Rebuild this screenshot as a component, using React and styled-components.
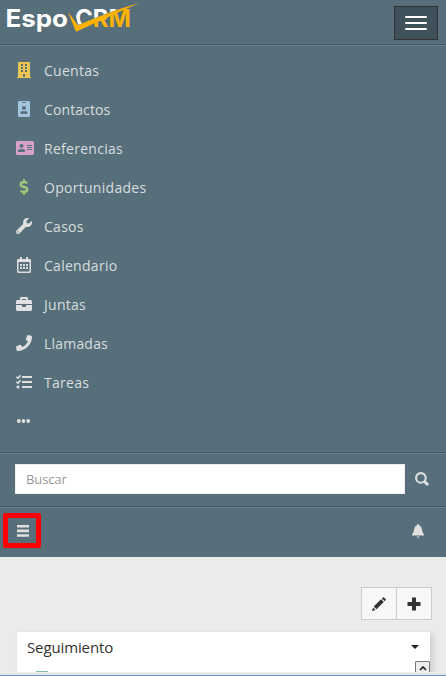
import React from "react";
import styled, { createGlobalStyle } from "styled-components";
import {
  FaBuilding, FaIdBadge, FaAddressCard, FaDollarSign, FaWrench,
  FaRegCalendarAlt, FaBriefcase, FaPhone, FaTasks,
} from "react-icons/fa";

const GlobalStyle = createGlobalStyle`
  * { box-sizing: border-box; }
  body { margin: 0; background: #ebebeb; font-family: "Open Sans", sans-serif; font-size: 14px; }
`;
const Page = styled.div`
  width: 446px; height: 676px; overflow: hidden;
  display: flex; flex-direction: column; background: #ebebeb;
`;
const Navbar = styled.header`
  height: 557px; flex: none; background: #566f7a; color: #d9dddf;
`;
const Brand = styled.div`
  height: 44px; display: flex; justify-content: space-between;
  padding: 0 8px 0 0;
`;
const Logo = styled.svg`
  display: block; width: 144px; height: 44px;
`;
const Toggle = styled.button`
  width: 44px; height: 34px; margin-top: 6px; padding: 0;
  display: flex; flex-direction: column; align-items: center; justify-content: center; gap: 4px;
  background: #3f525b; border: 1px solid #333;
`;
const Bar = styled.span`
  width: 22px; height: 2px; border-radius: 1px; background: #fff;
`;
const Section = styled.div`
  height: ${(p) => p.$height}px;
  border-top: 1px solid #435861;
  box-shadow: inset 0 1px 0 #68808b;
`;
const Menu = styled(Section)`
  padding-top: 6px;
`;
const Item = styled.a`
  height: 39px; display: flex; align-items: center; padding-left: 16px;
  letter-spacing: ${(p) => p.$spacing || "0.28px"};
`;
const MoreItem = styled(Item)`
  height: 37px;
`;
const IconBox = styled.span`
  width: 16px; margin-right: 12px; display: flex;
  color: ${(p) => p.$color || "#e0e0e0"};
  svg { flex: none; width: ${(p) => p.$iconWidth || 16}px; height: 16px; margin-top: -1px; }
`;
const SearchRow = styled(Section)`
  display: flex; padding: 11px 15px 0;
`;
const Input = styled.input`
  width: 390px; height: 30px; padding: 0 10px; border: 1px solid #eee; border-radius: 0;
  background: #fff; font: 13px "Open Sans", sans-serif; letter-spacing: -0.12px; outline: none;
  &::placeholder { color: #999; opacity: 1; }
`;
const SearchIcon = styled.svg`
  width: 14px; height: 14px; margin: 8px 0 0 10px;
`;
const Tools = styled(Section)`
  display: flex; justify-content: space-between; padding: 6px 21px 0 3px;
`;
const QuickMenu = styled.div`
  width: 38px; height: 35px; border: 5px solid #f00; border-radius: 2px;
  display: flex; align-items: center; justify-content: center; padding-left: 2px;
`;
const Small = styled.svg`
  width: ${(p) => p.$w}px; height: ${(p) => p.$h}px; display: block;
`;
const Bell = styled(Small)`
  margin-top: 11px;
`;
const Main = styled.main`
  height: 115px; flex: none; overflow: hidden; padding: 30px 14px 0 17px;
`;
const Actions = styled.div`
  display: flex; justify-content: flex-end;
`;
const Action = styled.button`
  width: 36px; height: 33px; padding: 0; display: flex; align-items: center; justify-content: center;
  background: #f7f7f7; border: 1px solid #ccc; color: #333;
  & + & { margin-left: -1px; }
`;
const Panel = styled.section`
  width: 413px; height: 60px; margin-top: 12px; background: #fff;
  box-shadow: 3px 2px 6px rgba(0, 0, 0, 0.13);
`;
const PanelHead = styled.div`
  height: 29px; display: flex; align-items: center; justify-content: space-between;
  padding: 1px 11px 0 10px; font-size: 15px; letter-spacing: -0.12px; color: #333;
`;
const Caret = styled.span`
  border: 4px solid transparent; border-top-color: #222; border-bottom: 0;
`;
const PanelBody = styled.div`
  display: flex; justify-content: space-between; height: 20px;
`;
const Entry = styled.span`
  width: 12px; height: 5px; margin: 10px 0 0 19px; background: #87bda3;
`;
const ScrollButton = styled.span`
  width: 15px; height: 16px; border: 1px solid #777; border-radius: 1px;
  background: #eee; display: flex; justify-content: center; padding-top: 4px;
`;
const Footer = styled.footer`
  height: 4px; flex: none; background: linear-gradient(#ebebeb 0 2px, #d8dfe5 2px 3px, #6f95c0 3px);
`;

const items = [
  { label: "Cuentas", Icon: FaBuilding, color: "#edc555" },
  { label: "Contactos", Icon: FaIdBadge, color: "#a4c5e0", spacing: "0.1px" },
  { label: "Referencias", Icon: FaAddressCard, color: "#d6a2c9", iconWidth: 18 },
  { label: "Oportunidades", Icon: FaDollarSign, color: "#9fc77e" },
  { label: "Casos", Icon: FaWrench },
  { label: "Calendario", Icon: FaRegCalendarAlt },
  { label: "Juntas", Icon: FaBriefcase },
  { label: "Llamadas", Icon: FaPhone, spacing: "0.2px" },
  { label: "Tareas", Icon: FaTasks },
];

function EspoLogo() {
  return (
    <Logo viewBox="0 0 144 44" fontFamily="Inter, sans-serif" fontWeight="700">
      <defs>
        <clipPath id="above"><path d="M72 0H144L139 2.5Q108 12 78 25Z" /></clipPath>
        <clipPath id="below"><path d="M88 27L92 22L139 3V30H88Z" /></clipPath>
      </defs>
      <text x="5.5" y="26.7" fontSize="24" fill="#fff" textLength="62.5" lengthAdjust="spacingAndGlyphs">Espo</text>
      <text x="75" y="26.7" fontSize="24" fill="#fff" textLength="56" lengthAdjust="spacingAndGlyphs" clipPath="url(#above)">CRM</text>
      <text x="75" y="26.7" fontSize="24" fill="#ffb300" textLength="56" lengthAdjust="spacingAndGlyphs" clipPath="url(#below)">CRM</text>
      <path d="M68 12L78 25.3Q108 12 139 3Q108 17 76 31.7Z" fill="#ffb300" />
    </Logo>
  );
}

export default function App() {
  return (
    <Page>
      <GlobalStyle />
      <Navbar>
        <Brand>
          <EspoLogo />
          <Toggle aria-label="Menu"><Bar /><Bar /><Bar /></Toggle>
        </Brand>
        <Menu as="nav" $height={408}>
          {items.map(({ label, Icon, color, spacing, iconWidth }) => (
            <Item key={label} $spacing={spacing}>
              <IconBox $color={color} $iconWidth={iconWidth}><Icon /></IconBox>
              {label}
            </Item>
          ))}
          <MoreItem>
            <Small $w={15} $h={14} viewBox="0 0 15 14" fill="#e0e0e0">
              <circle cx="2.8" cy="7" r="1.9" /><circle cx="7.5" cy="7" r="1.9" /><circle cx="12.2" cy="7" r="1.9" />
            </Small>
          </MoreItem>
        </Menu>
        <SearchRow $height={54}>
          <Input placeholder="Buscar" />
          <SearchIcon viewBox="0 0 14 14" fill="none" stroke="#e0e0e0">
            <circle cx="5.9" cy="5.9" r="4.8" strokeWidth="2.1" />
            <path d="M9.2 9.2L13.1 13.1" strokeWidth="2.8" />
          </SearchIcon>
        </SearchRow>
        <Tools $height={51}>
          <QuickMenu>
            <Small $w={12} $h={12} viewBox="0 0 12 12" fill="#e0e0e0">
              <path d="M0 0h12v2.6H0zM0 4.6h12v2.6H0zM0 9.2h12v2.6H0z" />
            </Small>
          </QuickMenu>
          <Bell $w={14} $h={14} viewBox="0 0 14 14" fill="#e0e0e0">
            <path d="M7 0Q8 0 8 1.2Q10.5 2 10.8 5Q11 8.7 13 10.4V11.5H1V10.4Q3 8.7 3.2 5Q3.5 2 6 1.2Q6 0 7 0ZM5.7 12.4H8.3Q8 13.8 7 13.8T5.7 12.4Z" />
          </Bell>
        </Tools>
      </Navbar>
      <Main>
        <Actions>
          <Action aria-label="Editar">
            <Small $w={14} $h={14} viewBox="0 0 14 14" fill="#333">
              <path d="M0 14L1 10.4L3.6 13ZM1.7 9.5L9 2.2L11.8 5L4.5 12.3ZM9.8 1.4L10.9 .4Q11.4-.1 12 .4L13.6 2Q14.1 2.6 13.6 3.1L12.6 4.2Z" />
            </Small>
          </Action>
          <Action aria-label="Agregar">
            <Small $w={14} $h={14} viewBox="0 0 14 14" fill="#333">
              <path d="M5 .5h4V5h4.5v4H9v4.5H5V9H.5V5H5z" />
            </Small>
          </Action>
        </Actions>
        <Panel>
          <PanelHead>Seguimiento<Caret /></PanelHead>
          <PanelBody>
            <Entry />
            <ScrollButton>
              <Small $w={8} $h={5} viewBox="0 0 8 5" fill="none" stroke="#222" strokeWidth="1.7"><path d="M1 4L4 1L7 4" /></Small>
            </ScrollButton>
          </PanelBody>
        </Panel>
      </Main>
      <Footer />
    </Page>
  );
}
